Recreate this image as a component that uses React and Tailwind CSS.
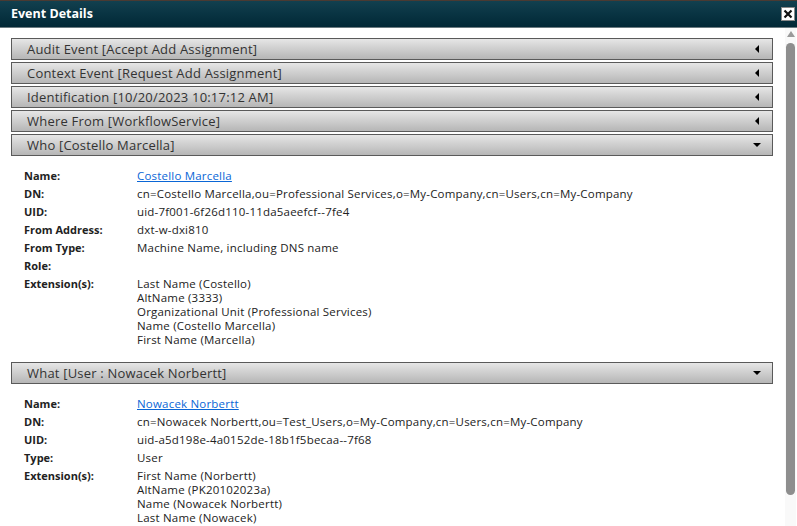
import React from 'react'

const font = { fontFamily: '"Open Sans", "Liberation Sans", sans-serif' }

const Header = ({ title, open }) => (
    <div className="h-[22px] mb-[2px] border border-[#5a5a5a] bg-gradient-to-b from-[#e6e6e6] to-[#b6b6b6] flex items-center pl-[15px] pr-[12px]">
        <span className="flex-1 text-[13px] tracking-[0.2px] text-[#333] leading-none">{title}</span>
        {open ? (
            <span className="w-0 h-0 border-l-[4px] border-r-[4px] border-t-[4px] border-l-transparent border-r-transparent border-t-black mr-[-1px]" />
        ) : (
            <span className="w-0 h-0 border-t-[4px] border-b-[4px] border-r-[4px] border-t-transparent border-b-transparent border-r-black mr-[1px]" />
        )}
    </div>
)

const Row = ({ label, children }) => (
    <div className="flex leading-[18px] text-[#222]">
        <div className="w-[113px] shrink-0 font-bold text-[11px]">{label}</div>
        <div className="text-[11.5px] tracking-[0.2px]">{children}</div>
    </div>
)

const ExtRow = ({ items }) => (
    <div className="flex text-[#222]">
        <div className="w-[113px] shrink-0 font-bold text-[11px] leading-[18px]">Extension(s):</div>
        <div className="text-[11.5px] tracking-[0.2px] leading-[14px] pt-[2px]">
            {items.map((i) => <div key={i}>{i}</div>)}
        </div>
    </div>
)

const App = () => {
    return (
        <div style={font} className="w-[797px] h-[526px] bg-white flex flex-col overflow-hidden">
            <div className="h-[28px] shrink-0 bg-gradient-to-b from-[#12404f] to-[#022836] border-t border-[#4a3a32] border-b border-b-[#6a7a80] flex items-center pl-[11px] pr-[2px]">
                <span className="flex-1 text-white font-bold text-[12.5px]">Event Details</span>
                <div className="w-[14px] h-[14px] bg-white border border-[#888] flex items-center justify-center">
                    <svg width="10" height="10" viewBox="0 0 10 10">
                        <path d="M1.5 1.5 L8.5 8.5 M8.5 1.5 L1.5 8.5" stroke="#111" strokeWidth="2.2" />
                    </svg>
                </div>
            </div>
            <div className="flex flex-1 min-h-0">
                <div className="flex-1 pl-[11px] pr-[12px] pt-[10px] overflow-hidden">
                    <Header title="Audit Event [Accept Add Assignment]" />
                    <Header title="Context Event [Request Add Assignment]" />
                    <Header title="Identification [10/20/2023 10:17:12 AM]" />
                    <Header title="Where From [WorkflowService]" />
                    <Header title="Who [Costello Marcella]" open />
                    <div className="pl-[13px] pt-[9px] pb-[15px]">
                        <Row label="Name:"><a href="#" className="text-[#0a66d6] underline">Costello Marcella</a></Row>
                        <Row label="DN:">cn=Costello Marcella,ou=Professional Services,o=My-Company,cn=Users,cn=My-Company</Row>
                        <Row label="UID:">uid-7f001-6f26d110-11da5aeefcf--7fe4</Row>
                        <Row label="From Address:">dxt-w-dxi810</Row>
                        <Row label="From Type:">Machine Name, including DNS name</Row>
                        <Row label="Role:"></Row>
                        <ExtRow items={['Last Name (Costello)', 'AltName (3333)', 'Organizational Unit (Professional Services)', 'Name (Costello Marcella)', 'First Name (Marcella)']} />
                    </div>
                    <Header title="What [User : Nowacek Norbertt]" open />
                    <div className="pl-[13px] pt-[9px]">
                        <Row label="Name:"><a href="#" className="text-[#0a66d6] underline">Nowacek Norbertt</a></Row>
                        <Row label="DN:">cn=Nowacek Norbertt,ou=Test_Users,o=My-Company,cn=Users,cn=My-Company</Row>
                        <Row label="UID:">uid-a5d198e-4a0152de-18b1f5becaa--7f68</Row>
                        <Row label="Type:">User</Row>
                        <ExtRow items={['First Name (Norbertt)', 'AltName (PK20102023a)', 'Name (Nowacek Norbertt)', 'Last Name (Nowacek)']} />
                    </div>
                </div>
                <div className="w-[11px] shrink-0 bg-[#f9f9f9] flex flex-col items-center pt-[3px] mr-[1px]">
                    <span className="w-0 h-0 border-l-[4px] border-r-[4px] border-b-[6px] border-l-transparent border-r-transparent border-b-[#9a9a9a]" />
                    <div className="w-[9px] h-[452px] mt-[6px] rounded-full bg-[#8e8e8e]" />
                </div>
            </div>
        </div>
    )
}

export default App
